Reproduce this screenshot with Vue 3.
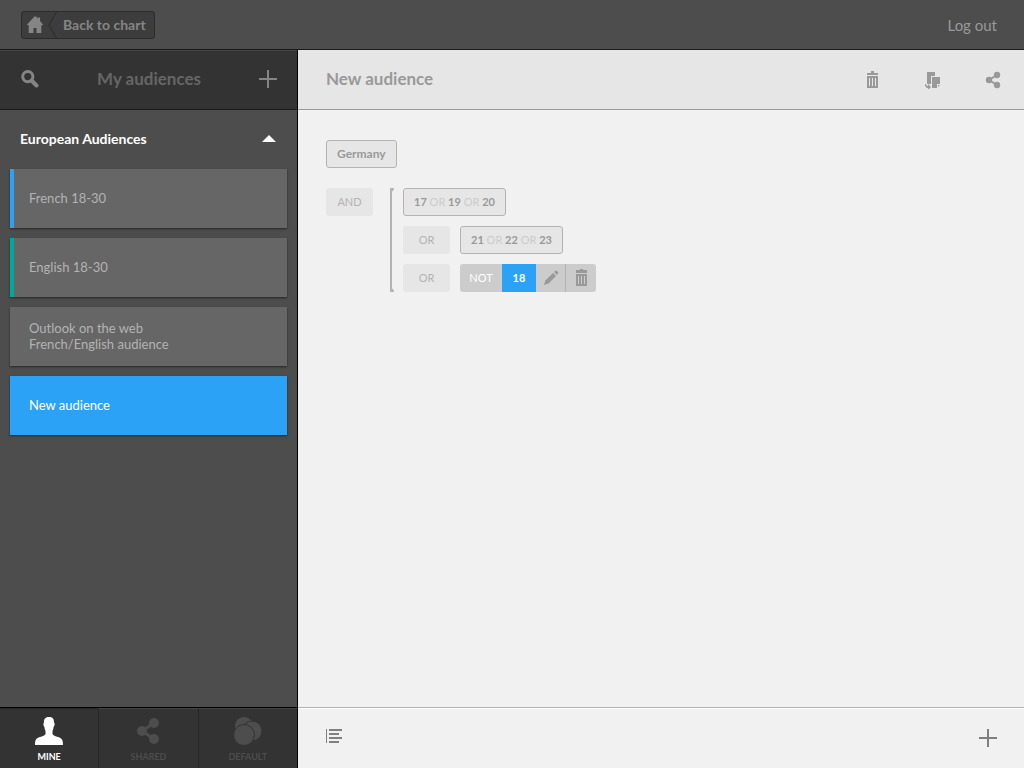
<script setup>
import { ref } from 'vue';

const audiences = ref([
    { id: 1, lines: ['French 18-30'], mark: 'blue' },
    { id: 2, lines: ['English 18-30'], mark: 'teal' },
    { id: 3, lines: ['Outlook on the web', 'French/English audience'], mark: '' },
    { id: 4, lines: ['New audience'], mark: '' }
]);

const rules = ref([
    { id: 1, join: '', values: ['17', '19', '20'] },
    { id: 2, join: 'OR', values: ['21', '22', '23'] }
]);

const selectedId = ref(4);
const isGroupOpen = ref(true);
const activeTab = ref('mine');

const toggleGroup = () => {
    isGroupOpen.value = !isGroupOpen.value;
};
</script>

<template>
    <div class="app">
        <header class="top-bar">
            <a href="#" class="back-link">
                <svg class="home-icon" width="16" height="17" viewBox="0 0 16 17" aria-hidden="true">
                    <path d="M7.5 0.5 H9 L11 2.5 V1.5 H13 V5 L16 8.5 L15.3 9.3 H14.3 V17 H9.5 V12 H6.5 V17 H1.7 V9.3 H0.7 L0 8.5 Z" />
                </svg>
                <svg class="back-arrow" width="9" height="26" viewBox="0 0 9 26" aria-hidden="true">
                    <path d="M8.5 0 L0.8 13 L8.5 26" />
                </svg>
                <span>Back to chart</span>
            </a>
            <a href="#" class="logout">Log out</a>
        </header>

        <div class="body">
            <aside class="sidebar">
                <div class="sidebar-header">
                    <button class="icon-button" aria-label="Search">
                        <svg width="18" height="18" viewBox="0 0 18 18" aria-hidden="true">
                            <circle cx="6.8" cy="6.6" r="5.1" fill="none" stroke="currentColor" stroke-width="3" />
                            <path d="M10.5 10.5 L15.5 15.5" stroke="currentColor" stroke-width="4" stroke-linecap="round" />
                        </svg>
                    </button>
                    <h2>My audiences</h2>
                    <button class="icon-button" aria-label="Add audience">
                        <svg width="18" height="18" viewBox="0 0 18 18" aria-hidden="true">
                            <path d="M8 0h2v8h8v2h-8v8h-2v-8h-8v-2h8z" fill="currentColor" />
                        </svg>
                    </button>
                </div>

                <button class="group-header" :aria-expanded="isGroupOpen" @click="toggleGroup">
                    <span>European Audiences</span>
                    <svg class="caret" :class="{ 'closed': !isGroupOpen }" width="14" height="7" viewBox="0 0 14 7" aria-hidden="true">
                        <path d="M7 0 L14 7 H0 Z" fill="currentColor" />
                    </svg>
                </button>

                <ul v-show="isGroupOpen" class="audience-list">
                    <li v-for="item in audiences" :key="item.id">
                        <button class="audience"
                                :class="[item.mark, { 'selected': item.id === selectedId }]"
                                @click="selectedId = item.id">
                            <span v-for="line in item.lines" :key="line">{{ line }}</span>
                        </button>
                    </li>
                </ul>

                <nav class="tabs">
                    <button class="tab" :class="{ 'active': activeTab === 'mine' }" @click="activeTab = 'mine'">
                        <svg width="28" height="30" viewBox="0 0 28 30" aria-hidden="true">
                            <path d="M14 1 C17.5 0.8 19.2 3 19 6.5 C20.1 7 19.7 10 18.6 11 C18.4 13.2 17.8 14 17.5 15 V18 C18 19.7 20.5 20.2 23 21 C27 22.2 28 24 28 29 H0 C0 24 1 22.2 5 21 C7.5 20.2 10 19.7 10.5 18 V15 C10.2 14 9.6 13.2 9.4 11 C8.3 10 8 7 9 6.5 C8.7 3.5 10 0.9 14 1 Z" fill="currentColor" />
                        </svg>
                        <span>MINE</span>
                    </button>
                    <button class="tab" :class="{ 'active': activeTab === 'shared' }" @click="activeTab = 'shared'">
                        <svg width="28" height="30" viewBox="0 0 28 30" aria-hidden="true">
                            <path d="M20 7 L8 15 L20 23" fill="none" stroke="currentColor" stroke-width="3" />
                            <circle cx="20" cy="7" r="5" fill="currentColor" />
                            <circle cx="8" cy="15" r="5" fill="currentColor" />
                            <circle cx="20" cy="23" r="5" fill="currentColor" />
                        </svg>
                        <span>SHARED</span>
                    </button>
                    <button class="tab" :class="{ 'active': activeTab === 'default' }" @click="activeTab = 'default'">
                        <svg class="circles" width="30" height="30" viewBox="0 0 30 30" aria-hidden="true">
                            <circle cx="11" cy="10" r="9.5" />
                            <circle cx="19" cy="15" r="10" />
                            <circle cx="11" cy="19" r="10.5" />
                        </svg>
                        <span>DEFAULT</span>
                    </button>
                </nav>
            </aside>

            <main class="main">
                <div class="main-header">
                    <h1>New audience</h1>
                    <button class="icon-button" aria-label="Delete audience">
                        <svg width="12" height="18" viewBox="0 0 12 18" aria-hidden="true">
                            <path d="M4 0h3v2h4v2h-11v-2h4z M0 5h11v12h-11z M2 7v8h1v-8z M5 7v8h1v-8z M8 7v8h1v-8z" fill="currentColor" fill-rule="evenodd" />
                        </svg>
                    </button>
                    <button class="icon-button" aria-label="Duplicate audience">
                        <svg width="16" height="18" viewBox="0 0 16 18" fill="currentColor" aria-hidden="true">
                            <path d="M2 1h8v4h-4v8h-4z" />
                            <path d="M7 6h8v7h-3v4h-5z M13 14h2l-2 2z" />
                            <path d="M0 13 h1 q0 2 2 2 v-2 l3 3 l-3 3 v-2 q-3 0 -3 -4z" />
                        </svg>
                    </button>
                    <button class="icon-button" aria-label="Share audience">
                        <svg width="16" height="18" viewBox="0 0 16 18" aria-hidden="true">
                            <path d="M12 4 L4 9 L12 14" fill="none" stroke="currentColor" stroke-width="2" />
                            <circle cx="12" cy="4" r="3.2" fill="currentColor" />
                            <circle cx="4" cy="9" r="3.2" fill="currentColor" />
                            <circle cx="12" cy="14" r="3.2" fill="currentColor" />
                        </svg>
                    </button>
                </div>

                <div class="canvas">
                    <button class="chip">Germany</button>

                    <div class="clause">
                        <button class="join">AND</button>
                        <div class="rules">
                            <svg class="corner top" width="4" height="4" viewBox="0 0 4 4" aria-hidden="true"><path d="M0 0H4V1L2 4H0Z" /></svg>
                            <svg class="corner bottom" width="4" height="4" viewBox="0 0 4 4" aria-hidden="true"><path d="M0 4H4V3L2 0H0Z" /></svg>
                            <div v-for="rule in rules" :key="rule.id" class="rule">
                                <button v-if="rule.join" class="join">{{ rule.join }}</button>
                                <button class="chip numbers">
                                    <template v-for="(value, index) in rule.values" :key="value">
                                        <span v-if="index" class="or">&nbsp;OR&nbsp;</span>{{ value }}
                                    </template>
                                </button>
                            </div>
                            <div class="rule">
                                <button class="join">OR</button>
                                <div class="editor">
                                    <button class="not">NOT</button>
                                    <button class="value">18</button>
                                    <button class="tool" aria-label="Edit rule">
                                        <svg width="16" height="16" viewBox="0 0 16 16" fill="currentColor" aria-hidden="true">
                                            <path d="M1 15 L2.3 10.5 L10 3 L13 6 L5.5 13.5 Z M11 2 L12.5 0.7 Q13.3 0.2 14 1 L15 2 Q15.7 2.8 15 3.5 L13.8 5 Z" />
                                        </svg>
                                    </button>
                                    <button class="tool last" aria-label="Delete rule">
                                        <svg width="13" height="18" viewBox="0 0 13 18" aria-hidden="true">
                                            <path d="M5 0h3v1h4v3h-11v-3h4z M1 5h11v12h-11z M3 7v8h1v-8z M6 7v8h1v-8z M9 7v8h1v-8z" fill="currentColor" fill-rule="evenodd" />
                                        </svg>
                                    </button>
                                </div>
                            </div>
                        </div>
                    </div>
                </div>

                <footer class="main-footer">
                    <button class="icon-button" aria-label="Show as list">
                        <svg width="16" height="18" viewBox="0 0 16 18" aria-hidden="true">
                            <path d="M0 0h1v14h-1z M3 0h13v2h-13z M3 4h10v2h-10z M3 8h13v2h-13z M3 12h10v2h-10z" fill="currentColor" />
                        </svg>
                    </button>
                    <button class="icon-button" aria-label="Add rule">
                        <svg width="18" height="18" viewBox="0 0 18 18" aria-hidden="true">
                            <path d="M8 0h2v8h8v2h-8v8h-2v-8h-8v-2h8z" fill="currentColor" />
                        </svg>
                    </button>
                </footer>
            </main>
        </div>
    </div>
</template>

<style>
body {
    margin: 0;
}
</style>

<style scoped>
.app {
    display: flex;
    flex-direction: column;
    min-height: 100vh;
    background: #f1f1f1;
    font-family: Lato, "Open Sans", sans-serif;
    font-size: 14px;
    line-height: 16px;
}

.app * {
    box-sizing: border-box;
}

button {
    margin: 0;
    padding: 0;
    border: none;
    background: none;
    color: inherit;
    font: inherit;
    cursor: pointer;
}

a {
    text-decoration: none;
}

svg {
    display: block;
    flex-shrink: 0;
}

h1,
h2 {
    margin: 0;
    font-size: 17px;
    line-height: 24px;
    font-weight: 700;
}

.top-bar {
    display: flex;
    align-items: center;
    justify-content: space-between;
    height: 50px;
    padding: 0 27px 0 21px;
    background: #4d4d4d;
    border-bottom: 1px solid #1a1a1a;
}

.back-link {
    display: flex;
    align-items: center;
    height: 28px;
    padding: 0 8px 0 5px;
    border: 1px solid #2b2b2b;
    border-radius: 3px;
    background: #3d3d3d;
    color: #858585;
    font-weight: 700;
}

.home-icon {
    fill: #858585;
}

.back-arrow {
    margin: 0 6px 0 5px;
    fill: none;
    stroke: #2b2b2b;
}

.logout {
    color: #999;
    font-size: 15px;
}

.body {
    display: flex;
    flex: 1;
}

.sidebar {
    display: flex;
    flex-direction: column;
    flex: 0 0 298px;
    background: #4d4d4d;
    border-right: 1px solid #000;
}

.sidebar-header {
    display: flex;
    align-items: center;
    justify-content: space-between;
    height: 60px;
    padding: 0 20px 2px 21px;
    background: #333;
    border-top: 1px solid #444;
    border-bottom: 1px solid #1a1a1a;
    color: #858585;
}

.sidebar-header h2 {
    color: #666;
}

.group-header {
    display: flex;
    align-items: center;
    justify-content: space-between;
    height: 59px;
    padding: 0 21px 2px 20px;
    color: #fff;
    font-weight: 700;
}

.caret.closed {
    transform: rotate(180deg);
}

.audience-list {
    display: flex;
    flex-direction: column;
    gap: 10px;
    margin: 0;
    padding: 0 10px 10px;
    list-style: none;
}

.audience {
    display: flex;
    flex-direction: column;
    justify-content: center;
    width: 100%;
    height: 59px;
    padding: 0 15px 2px;
    border-left: 4px solid #666;
    background: #666;
    box-shadow: 0 1px 2px rgba(0, 0, 0, 0.5);
    color: #b3b3b3;
    font-size: 13px;
    text-align: left;
}

.audience.blue {
    border-left-color: #2ca2f6;
}

.audience.teal {
    border-left-color: #00a99d;
}

.audience.selected {
    border-left-color: #2ca2f6;
    background: #2ca2f6;
    color: #fff;
}

.tabs {
    display: flex;
    height: 61px;
    margin-top: auto;
    border-top: 1px solid #000;
    background: #333;
}

.tab {
    display: flex;
    flex: 1;
    flex-direction: column;
    align-items: center;
    gap: 5px;
    padding-top: 7px;
    border-top: 1px solid #444;
    border-left: 1px solid #262626;
    color: #4d4d4d;
    font-size: 9px;
    line-height: 12px;
    font-weight: 700;
}

.tab:first-child {
    border-left: none;
}

.tab.active {
    border-top-color: #262626;
    color: #fff;
}

.circles {
    fill: currentColor;
    stroke: #333;
}

.main {
    display: flex;
    flex: 1;
    flex-direction: column;
    min-width: 0;
}

.main-header {
    display: flex;
    align-items: center;
    height: 60px;
    padding: 0 1px 0 28px;
    background: #e6e6e6;
    border-bottom: 1px solid #999;
    color: #999;
}

.main-header h1 {
    flex: 1;
    padding-bottom: 2px;
}

.main-header .icon-button {
    display: flex;
    justify-content: center;
    width: 60px;
}

.canvas {
    display: flex;
    flex: 1;
    flex-direction: column;
    align-items: flex-start;
    gap: 20px;
    padding: 30px 28px;
    font-size: 12px;
}

.chip,
.join {
    display: flex;
    align-items: center;
    justify-content: center;
    height: 28px;
    border-radius: 3px;
    background: #e6e6e6;
}

.chip {
    padding: 0 10px;
    border: 1px solid #b3b3b3;
    color: #999;
    font-weight: 700;
}

.chip.numbers {
    font-size: 11px;
}

.or {
    color: #ccc;
    font-weight: 400;
}

.join {
    width: 47px;
    color: #b3b3b3;
    font-size: 11px;
}

.clause {
    display: flex;
    align-items: flex-start;
    gap: 17px;
}

.rules {
    position: relative;
    display: flex;
    flex-direction: column;
    gap: 10px;
    padding-left: 11px;
    border-left: 2px solid #b3b3b3;
}

.corner {
    position: absolute;
    left: -2px;
    fill: #b3b3b3;
}

.corner.top {
    top: 0;
}

.corner.bottom {
    bottom: 0;
}

.rule {
    display: flex;
    gap: 10px;
}

.editor {
    display: flex;
    height: 28px;
    overflow: hidden;
    border-radius: 3px;
    background: #ccc;
    color: #fff;
    font-size: 11px;
}

.not {
    width: 42px;
}

.value {
    width: 34px;
    background: #2ca2f6;
    font-weight: 700;
}

.tool {
    display: flex;
    align-items: center;
    justify-content: center;
    width: 29px;
    color: #999;
}

.tool.last {
    width: 31px;
    border-left: 1px solid #b3b3b3;
}

.main-footer {
    display: flex;
    align-items: center;
    justify-content: space-between;
    height: 61px;
    padding: 0 27px 0 28px;
    border-top: 1px solid #b3b3b3;
    box-shadow: inset 0 1px 0 #fff;
    color: #808080;
}
</style>
